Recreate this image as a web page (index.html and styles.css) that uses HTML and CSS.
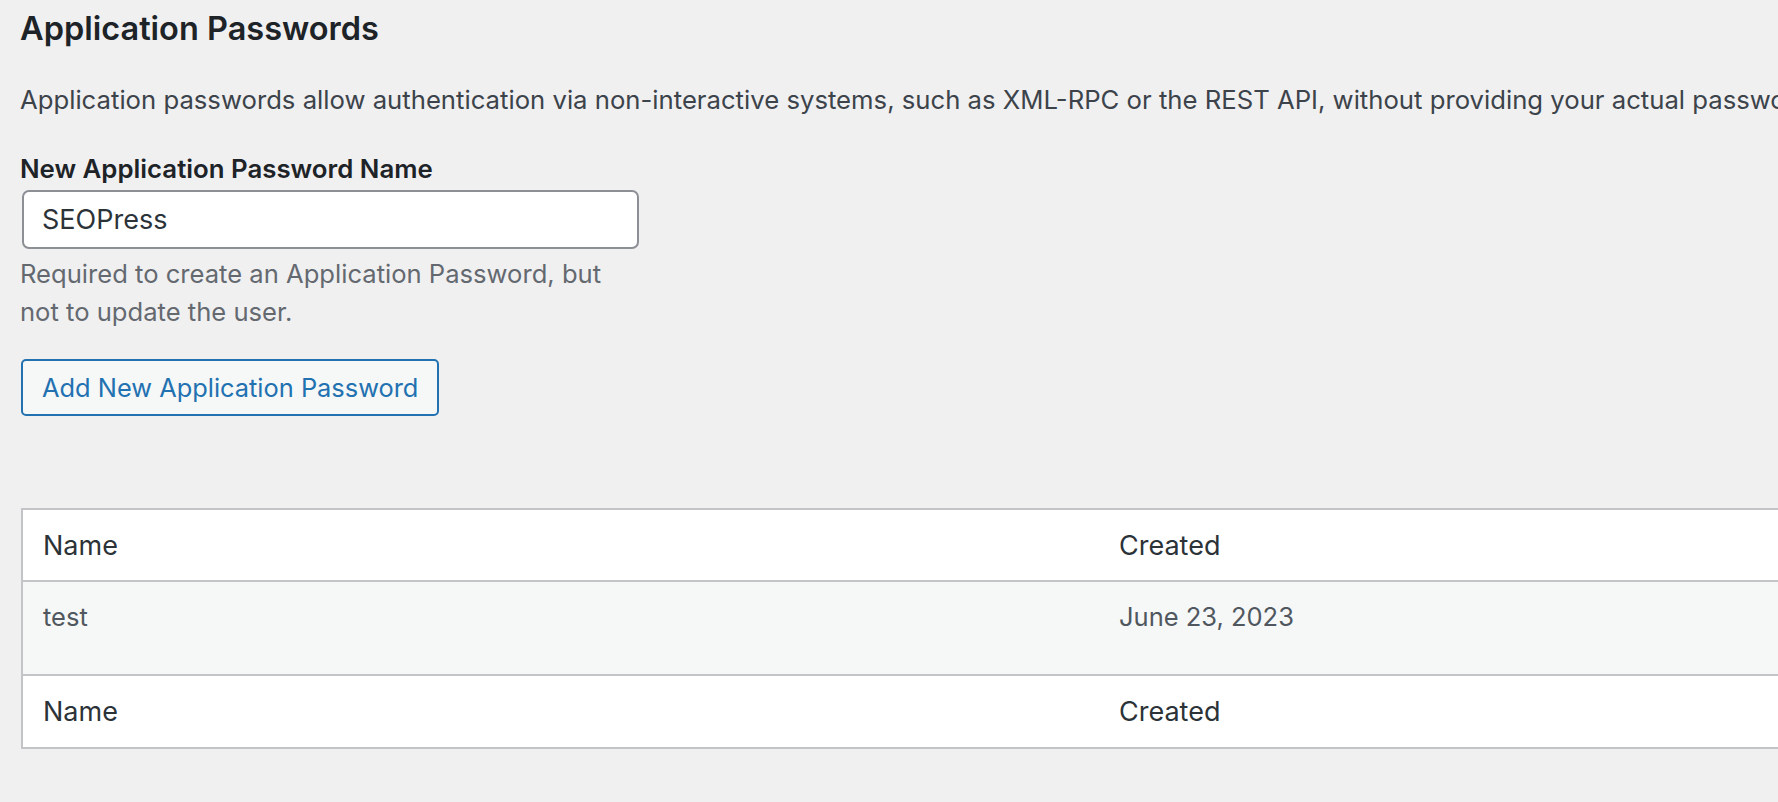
FILE: index.html
```html
<!DOCTYPE html>
<html lang="en">
<head>
<meta charset="utf-8">
<title>Application Passwords</title>
<link rel="stylesheet" href="styles.css">
</head>
<body>
<div class="page">
  <h2 class="title">Application Passwords</h2>
  <p class="intro">Application passwords allow authentication via non-interactive systems, such as XML-RPC or the REST API, without providing your actual password. Application passwords can be easily revoked.</p>
  <div class="form-field">
    <label class="field-label" for="app-name">New Application Password Name</label>
    <input class="text-input" id="app-name" type="text" value="SEOPress">
    <p class="help">Required to create an Application Password, but not to update the user.</p>
  </div>
  <button class="btn" type="button">Add New Application Password</button>
  <table class="list">
    <thead>
      <tr><th class="col-name">Name</th><th class="col-created">Created</th></tr>
    </thead>
    <tbody>
      <tr><td class="col-name">test</td><td class="col-created">June 23, 2023</td></tr>
    </tbody>
    <tfoot>
      <tr><th class="col-name">Name</th><th class="col-created">Created</th></tr>
    </tfoot>
  </table>
</div>
</body>
</html>
```
FILE: styles.css
```css
html, body {
  margin: 0;
  padding: 0;
  background: #f0f0f1;
  overflow: hidden;
}
body {
  font-family: Inter, "Noto Sans", sans-serif;
  color: #3c434a;
}
.page {
  padding-left: 20px;
  width: 2400px;
}
.title {
  margin: 9px 0 0;
  font-size: 32.5px;
  line-height: 40px;
  font-weight: 600;
  color: #1d2327;
}
.intro {
  margin: 33px 0 0;
  font-size: 25.7px;
  line-height: 35px;
  white-space: nowrap;
  color: #3c434a;
}
.form-field {
  margin-top: 34px;
  width: 620px;
}
.field-label {
  display: block;
  font-size: 25.8px;
  line-height: 35px;
  font-weight: 600;
  color: #1d2327;
}
.text-input {
  display: block;
  box-sizing: border-box;
  margin: 4px 0 0 2px;
  width: 617px;
  height: 59px;
  padding: 0 18px;
  border: 2px solid #8c8f94;
  border-radius: 7px;
  background: #fff;
  font-family: inherit;
  font-size: 27px;
  color: #2c3338;
  outline: none;
}
.help {
  margin: 6px 0 0;
  font-size: 25.6px;
  line-height: 38px;
  color: #646970;
  width: 600px;
}
.btn {
  display: block;
  box-sizing: border-box;
  margin: 28px 0 0 1px;
  height: 57px;
  padding: 0 19px;
  border: 2px solid #2271b1;
  border-radius: 5px;
  background: #f6f7f7;
  color: #2271b1;
  font-family: inherit;
  font-size: 25.4px;
  line-height: 1;
}
.list {
  margin-top: 92px;
  margin-left: 1px;
  width: 1900px;
  border-collapse: collapse;
  border: 2px solid #c3c4c7;
  background: #fff;
  table-layout: fixed;
}
.list th, .list td {
  text-align: left;
  font-weight: 400;
  font-size: 27px;
  line-height: 38px;
  padding: 17px 20px 15px;
}
.list .col-name {
  width: 1036px;
}
.list thead th {
  color: #2c3338;
  border-bottom: 2px solid #c3c4c7;
}
.list tbody td {
  background: #f6f7f7;
  color: #50575e;
  font-size: 25.5px;
  padding-top: 16px;
  padding-bottom: 38px;
  border-bottom: 2px solid #c3c4c7;
}
.list tfoot th {
  color: #2c3338;
  padding-top: 17px;
  padding-bottom: 16px;
}
```
